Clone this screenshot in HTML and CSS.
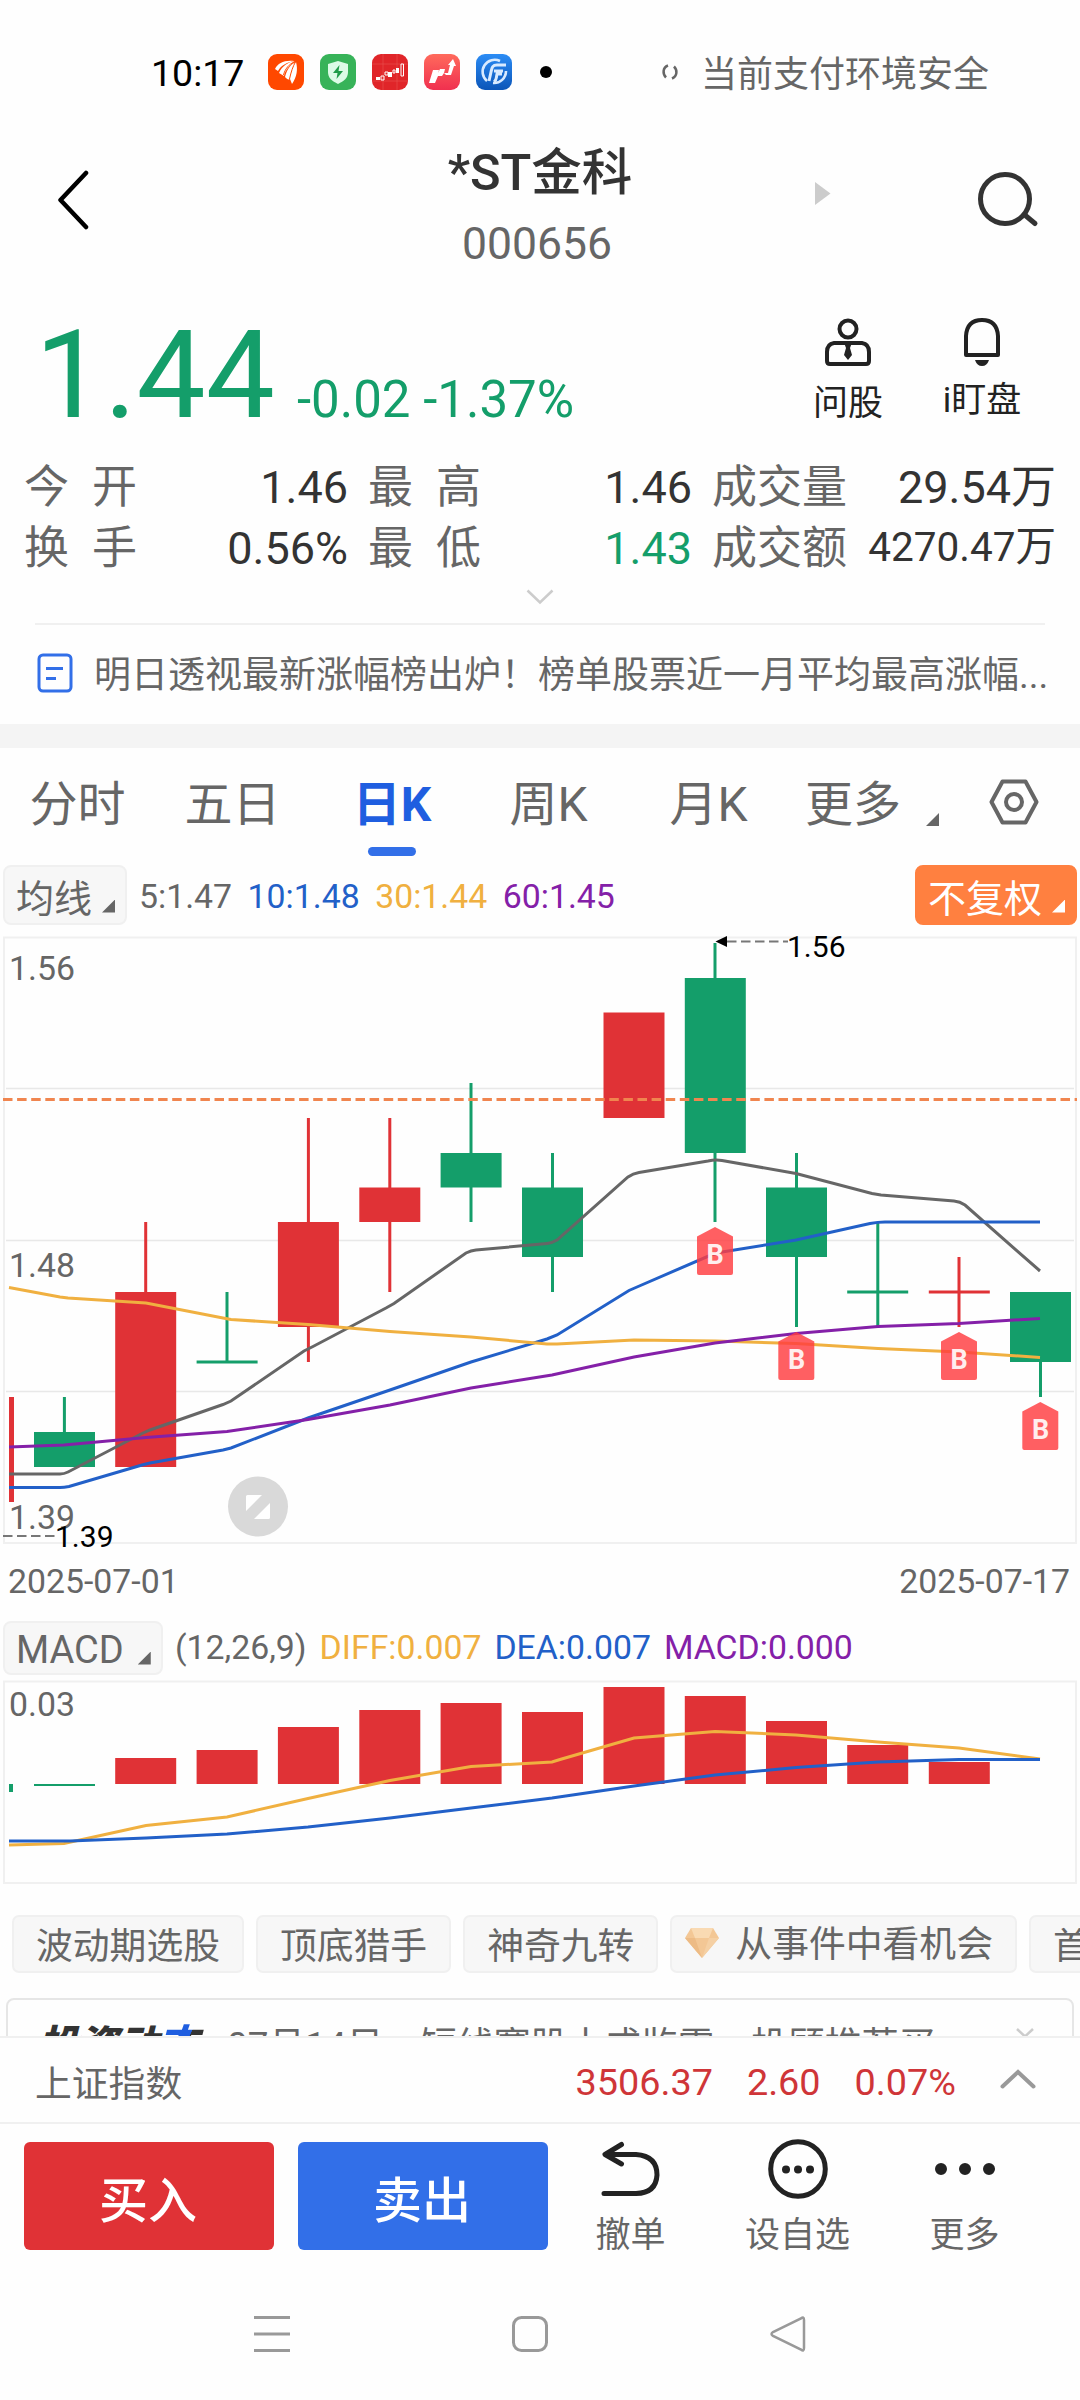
FILE: index.html
```
<!DOCTYPE html>
<html lang="zh-CN">
<head>
    <meta charset="UTF-8">
    <title>*ST金科 000656</title>
    <link rel="stylesheet" href="styles.css">
</head>
<body>
    <div class="phone">
        <div class="status-bar">
            <span class="clock">10:17</span>
            <div class="app-icons">
                <svg width="36" height="36" viewBox="0 0 36 36">
                    <rect width="36" height="36" rx="9" fill="#ff4800"/>
                    <path d="M7 15C10 9 16 6 26 7C20 8 13 11 10 17Z" fill="#fff"/>
                    <path d="M11 19C14 12 20 8 27 7C22 11 17 16 16 22Z" fill="#fff"/>
                    <path d="M17 23C19 15 23 10 28 8C30 15 29 23 24 30L22 25C20 26 19 25 17 23Z" fill="#fff"/>
                    <path d="M15.500 21C17 15 21 10 27 7.500M21.500 25C23 18 25 12 27.500 8" stroke="#ff4800" stroke-width="1" fill="none"/>
                </svg>
                <svg width="36" height="36" viewBox="0 0 36 36">
                    <rect width="36" height="36" rx="9" fill="#37b359"/>
                    <path d="M18 7L28 10V18C28 24 24 27 18 30C12 27 8 24 8 18V10Z" fill="#dcfbe6"/>
                    <path d="M19.500 11L13 19H17.500L16.500 25L23 17H18.500Z" fill="#1f9c48"/>
                </svg>
                <svg width="36" height="36" viewBox="0 0 36 36">
                    <rect width="36" height="36" rx="9" fill="#e02529"/>
                    <path d="M0 10H36M0 27H36M11 0V36M25 0V36" stroke="#ea5053" stroke-width=".6"/>
                    <path d="M4 23h4v3h-4zM16 18h4v5h-4zM24 14h3v5h-3z" fill="#fff"/>
                    <path d="M9 22h3v4h-3zM13 18h3v3h-3zM21 16h2v3h-2zM29 10h2.500v12h-2.500z" fill="none" stroke="#fff" stroke-width="1"/>
                </svg>
                <svg width="36" height="36" viewBox="0 0 36 36">
                    <defs>
                        <linearGradient id="pink" x1="0" y1="0" x2="0" y2="1">
                            <stop offset="0" stop-color="#ff6a5c"/>
                            <stop offset="1" stop-color="#f0304f"/>
                        </linearGradient>
                    </defs>
                    <rect width="36" height="36" rx="9" fill="url(#pink)"/>
                    <path d="M9 16H15L14 19L16 15H21L20 19H24L26 11H24L29 5L32 12H30L27 21H22L20 19L18 22H14L11 29H5Z" fill="#fff"/>
                </svg>
                <svg width="36" height="36" viewBox="0 0 36 36">
                    <defs>
                        <linearGradient id="blue" x1="0" y1="0" x2="0" y2="1">
                            <stop offset="0" stop-color="#2b8cf5"/>
                            <stop offset="1" stop-color="#0b55b8"/>
                        </linearGradient>
                    </defs>
                    <rect width="36" height="36" rx="9" fill="url(#blue)"/>
                    <path d="M24 7A12 12 0 0 0 11 27M30 17A12 12 0 0 1 17 29" fill="none" stroke="#d8eaff" stroke-width="2.600"/>
                    <path d="M30 11H21C16 11 16 14 15 18L13 27M27 17H18M18 28C21 26 20 24 21 20H26" fill="none" stroke="#d8eaff" stroke-width="3"/>
                </svg>
            </div>
            <span class="dot"></span>
            <svg class="spinner" width="18" height="18" viewBox="0 0 18 18">
                <path d="M7 2.500C1.500 4.500 1.500 11 5 14.500M11 15.500C16.500 13 16.500 7 13 3.500" fill="none" stroke="#666" stroke-width="2.500"/>
            </svg>
            <span class="safe">当前支付环境安全</span>
        </div>

        <div class="header">
            <svg class="back" width="32" height="60" viewBox="0 0 32 60">
                <path d="M29 3L3.500 30L29 57" fill="none" stroke="#000" stroke-width="4.500" stroke-linecap="round" stroke-linejoin="round"/>
            </svg>
            <div class="title">
                <h1>*ST金科</h1>
                <p>000656</p>
            </div>
            <svg class="next" width="16" height="24" viewBox="0 0 16 24">
                <path d="M0 0L15.500 11.500L0 23Z" fill="#ccc"/>
            </svg>
            <svg class="search" width="62" height="58" viewBox="0 0 62 58">
                <circle cx="27" cy="28" r="24.500" fill="none" stroke="#333" stroke-width="5"/>
                <path d="M48 45L57 52.500" stroke="#333" stroke-width="5" stroke-linecap="round"/>
            </svg>
        </div>

        <div class="quote">
            <span class="price">1.44</span>
            <span class="change">-0.02 -1.37%</span>
            <div class="quote-action ask">
                <svg width="48" height="48" viewBox="0 0 48 48">
                    <circle cx="24" cy="11" r="8.500" fill="none" stroke="#222" stroke-width="4"/>
                    <path d="M10 25H38Q45 26 45 34V43Q45 46 42 46H6Q3 46 3 43V34Q3 26 10 25Z" fill="none" stroke="#222" stroke-width="4"/>
                    <path d="M20.500 26H27.500L26 30L28 37L24 42L20 37L22 30Z" fill="#222"/>
                </svg>
                <span>问股</span>
            </div>
            <div class="quote-action watch">
                <svg width="48" height="48" viewBox="0 0 48 48">
                    <path d="M8 37V18Q9 2 24 2Q39 2 40 18V37Z" fill="none" stroke="#222" stroke-width="4" stroke-linejoin="round"/>
                    <path d="M17 42H31Q29 48 24 48Q19 48 17 42Z" fill="#222"/>
                </svg>
                <span>i盯盘</span>
            </div>
        </div>

        <div class="stats">
            <div class="stat"><span class="name wide">今开</span><span>1.46</span></div>
            <div class="stat"><span class="name wide">最高</span><span>1.46</span></div>
            <div class="stat"><span class="name">成交量</span><span>29.54万</span></div>
            <div class="stat"><span class="name wide">换手</span><span>0.56%</span></div>
            <div class="stat"><span class="name wide">最低</span><span class="down">1.43</span></div>
            <div class="stat"><span class="name">成交额</span><span class="small">4270.47万</span></div>
        </div>
        <div class="expand">
            <svg width="28" height="16" viewBox="0 0 28 16">
                <path d="M1.500 1.500L14 13.500L26.500 1.500" fill="none" stroke="#ccc" stroke-width="2.500"/>
            </svg>
        </div>

        <div class="news">
            <svg width="36" height="40" viewBox="0 0 36 40">
                <rect x="2" y="2" width="32" height="36" rx="4" fill="none" stroke="#326fe8" stroke-width="3"/>
                <path d="M9 15.500H26M9 25.500H19" stroke="#326fe8" stroke-width="3"/>
            </svg>
            <p>明日透视最新涨幅榜出炉！榜单股票近一月平均最高涨幅...</p>
        </div>

        <div class="tabs">
            <span>分时</span>
            <span>五日</span>
            <span class="active">日K</span>
            <span>周K</span>
            <span>月K</span>
            <span>更多</span>
            <i class="corner"></i>
            <svg width="50" height="46" viewBox="0 0 50 46">
                <path d="M13.500 2.500H36.500L47.500 23L36.500 43.500H13.500L2.500 23Z" fill="none" stroke="#666" stroke-width="4" stroke-linejoin="round"/>
                <circle cx="25" cy="23" r="8" fill="none" stroke="#666" stroke-width="4"/>
            </svg>
        </div>

        <div class="indicator">
            <div class="pill">均线<i class="corner"></i></div>
            <span class="ma5">5:1.47</span>
            <span class="ma10">10:1.48</span>
            <span class="ma30">30:1.44</span>
            <span class="ma60">60:1.45</span>
            <div class="pill adjust">不复权<i class="corner"></i></div>
        </div>

        <svg class="chart" width="1080" height="625" viewBox="0 925 1080 625">
            <!-- frame and grid -->
            <path class="frame" d="M4 937.500H1076V1543H4Z"/>
            <path class="grid" d="M6 1088.500H1074M6 1240.500H1074M6 1391.500H1074"/>

            <!-- candles -->
            <g class="up">
                <path d="M9 1397h5v105h-5z"/>
                <path d="M144.200 1222h3v70h-3zM115.200 1292h61v175h-61z"/>
                <path d="M306.900 1118h3v244h-3zM277.900 1222h61v105h-61z"/>
                <path d="M388.300 1118h3v174h-3zM359.300 1187.500h61v34.500h-61z"/>
                <path d="M603.500 1012.500h61v105.500h-61z"/>
                <path d="M957.500 1257h3v70h-3zM928.800 1290.500h61v3h-61z"/>
            </g>
            <g class="fall">
                <path d="M62.900 1397h3v35h-3zM34 1432h61v35h-61z"/>
                <path d="M225.500 1292h3v70h-3zM196.600 1360.500h61v3h-61z"/>
                <path d="M469.500 1083h3v139h-3zM440.600 1153h61v34.500h-61z"/>
                <path d="M551 1153h3v139h-3zM522 1187.500h61v69.500h-61z"/>
                <path d="M713.500 943h3v279h-3zM684.800 978h61v175h-61z"/>
                <path d="M795 1153h3v174h-3zM766 1187.500h61v69.500h-61z"/>
                <path d="M876.300 1222h3v105h-3zM847.200 1290.500h61v3h-61z"/>
                <path d="M1039 1362h3v35h-3zM1010 1292h61v70h-61z"/>
            </g>

            <path class="cost" d="M3 1099.500H1077"/>

            <!-- moving averages -->
            <g class="line">
                <path stroke="#666" d="M9 1474H60Q64 1474 68 1472L142 1433.500L150 1430L223 1404.500L231 1401L304 1351L313 1346.500L386 1308L394 1303.500L466 1253Q471 1250.500 476 1250L547 1243.500Q552 1243 557 1240L628 1177Q633 1173.500 639 1172.500L708 1161Q715 1159.500 722 1160.500L796 1173.500L872 1193.500L881 1195L954 1201Q960 1201.500 965 1205L1040 1271"/>
                <path stroke="#2260c8" d="M9 1487.500H60Q64 1487.500 69 1486.500L142 1465L150 1463L223 1450L231 1448L308 1418L390 1390L471 1362L547 1339L557 1335L629 1290.500L637 1287L711 1255L719 1252.500L796 1240L870 1223.500Q878 1222 885 1222H1040"/>
                <path stroke="#f0b040" d="M9 1287.500L60 1297L68 1298L146 1303L223 1318L231 1319.500L308 1324.500L390 1331.500L471 1337L547 1344L557 1344L634 1340L715 1341L796 1343.500L878 1348.500L959 1352L1040 1357.500"/>
                <path stroke="#8420a8" d="M9 1447L64 1445L146 1437.500L227 1431.500L308 1419.500L390 1405L471 1388L552 1375L634 1357L715 1343L796 1333.500L878 1326.500L959 1323.500L1040 1318.500"/>
            </g>

            <!-- buy marks -->
            <g class="mark">
                <path d="M715 1227L733 1236.500V1273Q733 1275 731 1275H699Q697 1275 697 1273V1236.500Z"/>
                <path d="M796.300 1332L814.300 1341.500V1378Q814.300 1380 812.300 1380H780.300Q778.300 1380 778.300 1378V1341.500Z"/>
                <path d="M959 1332L977 1341.500V1378Q977 1380 975 1380H943Q941 1380 941 1378V1341.500Z"/>
                <path d="M1040.300 1402L1058.300 1411.500V1448Q1058.300 1450 1056.300 1450H1024.300Q1022.300 1450 1022.300 1448V1411.500Z"/>
                <text x="715" y="1264">B</text>
                <text x="796.500" y="1369">B</text>
                <text x="959" y="1369">B</text>
                <text x="1040.500" y="1439">B</text>
            </g>

            <!-- high and low -->
            <path d="M715.500 941.500L727 936V947Z"/>
            <path class="leader" d="M727 941.500H788M3 1536H56"/>
            <text class="extreme" x="787" y="957">1.56</text>
            <text class="axis" x="9" y="980">1.56</text>
            <text class="axis" x="9" y="1277">1.48</text>
            <text class="axis" x="9" y="1529">1.39</text>
            <text class="extreme" x="55" y="1546.500">1.39</text>

            <!-- landscape button -->
            <circle cx="258" cy="1506.500" r="30" fill="#d9d9d9"/>
            <path d="M246 1496.500Q246 1495 247.500 1495H262L246 1511ZM270 1503V1517.500Q270 1519 268.500 1519H254Z" fill="#fff"/>
        </svg>
        <div class="dates">
            <span>2025-07-01</span>
            <span>2025-07-17</span>
        </div>

        <div class="indicator macd">
            <div class="pill">MACD<i class="corner"></i></div>
            <span>(12,26,9)</span>
            <span class="ma30">DIFF:0.007</span>
            <span class="ma10">DEA:0.007</span>
            <span class="ma60">MACD:0.000</span>
        </div>
        <svg class="chart" width="1080" height="212" viewBox="0 1675 1080 212">
            <path class="frame" d="M4 1681.500H1076V1883H4Z"/>
            <text class="axis" x="9" y="1716">0.03</text>
            <path class="fall" d="M9 1784h4v8h-4zM34 1784h61v2h-61z"/>
            <path class="up" d="M115.200 1758h61v26h-61zM196.600 1750h61v34h-61zM277.900 1727h61v57h-61zM359.300 1710h61v74h-61zM440.600 1703h61v81h-61zM522 1712h61v72h-61zM603.500 1687h61v97h-61zM684.800 1696h61v88h-61zM766 1721h61v63h-61zM847.200 1745h61v39h-61zM928.800 1762h61v22h-61z"/>
            <g class="line">
                <path stroke="#f0b040" d="M9 1845L64 1843.500L146 1825.500L227 1817L308 1798.500L390 1780.500L471 1766.500L552 1762L560 1759.500L634 1738L715 1731.500L796 1735L878 1742L959 1748L1040 1759"/>
                <path stroke="#2260c8" d="M9 1841H70L146 1838L227 1834L308 1827L390 1818L471 1808L552 1798L634 1786L715 1775L796 1767.500L878 1762L959 1759.500H1040"/>
            </g>
        </svg>

        <div class="chips">
            <span>波动期选股</span>
            <span>顶底猎手</span>
            <span>神奇九转</span>
            <span class="gem">
                <svg width="34" height="30" viewBox="0 0 34 30">
                    <path d="M6 0H28L34 10L17 30L0 10Z" fill="#f3c795"/>
                    <path d="M6 0H28L24 10H10Z" fill="#f9dab3"/>
                    <path d="M0 10H10L17 30Z" fill="#edbb85"/>
                    <path d="M34 10H24L17 30Z" fill="#f5d0a4"/>
                </svg>
                从事件中看机会
            </span>
            <span>首</span>
        </div>

        <div class="feed">
            <div class="feed-card">
                <span class="logo">投资动<em>态</em></span>
                <span class="feed-text">07月14日，短线赛股丨成监雷，投顾推荐买</span>
                <svg width="18" height="10" viewBox="0 0 18 10">
                    <path d="M1 1L9 8.500L17 1" fill="none" stroke="#ccc" stroke-width="2.500"/>
                </svg>
            </div>
        </div>

        <div class="index-bar">
            <span class="index-name">上证指数</span>
            <span class="index-value">3506.37</span>
            <span class="index-value">2.60</span>
            <span class="index-value">0.07%</span>
            <svg width="36" height="20" viewBox="0 0 36 20">
                <path d="M2.500 17.500L18 3L33.500 17.500" fill="none" stroke="#999" stroke-width="4" stroke-linecap="round"/>
            </svg>
        </div>

        <div class="trade-bar">
            <button class="buy">买入</button>
            <button class="sell">卖出</button>
            <div class="tool">
                <svg width="60" height="60" viewBox="0 0 60 60">
                    <path d="M20.500 5.500L4 15.500L20.500 25M5 15.500H35Q56 17 56 36Q55 54 35 54.500H3" fill="none" stroke="#222" stroke-width="5" stroke-linecap="round" stroke-linejoin="round"/>
                </svg>
                <span>撤单</span>
            </div>
            <div class="tool">
                <svg width="60" height="60" viewBox="0 0 60 60">
                    <circle cx="30" cy="30" r="27.300" fill="none" stroke="#222" stroke-width="5"/>
                    <path d="M18 30.500h.01M30 30.500h.01M42 30.500h.01" stroke="#222" stroke-width="8" stroke-linecap="round"/>
                </svg>
                <span>设自选</span>
            </div>
            <div class="tool">
                <svg width="60" height="60" viewBox="0 0 60 60">
                    <path d="M6 30h.01M30 30h.01M54 30h.01" stroke="#222" stroke-width="12" stroke-linecap="round"/>
                </svg>
                <span>更多</span>
            </div>
        </div>

        <div class="nav-bar">
            <svg width="36" height="36" viewBox="0 0 36 36">
                <path d="M0 1.500H36M0 18H36M0 34.500H36" stroke="#999" stroke-width="3"/>
            </svg>
            <svg width="36" height="36" viewBox="0 0 36 36">
                <rect x="1.500" y="1.500" width="33" height="33" rx="8" fill="none" stroke="#999" stroke-width="3"/>
            </svg>
            <svg width="36" height="36" viewBox="0 0 36 36">
                <path d="M31 2.500Q34 0 34 4V32Q34 36 31 33.500L3 20Q0 18 3 16Z" fill="none" stroke="#999" stroke-width="2.500"/>
            </svg>
        </div>
    </div>
</body>
</html>
```
FILE: styles.css
```
* {
    box-sizing: border-box;
}
body {
    margin: 0;
    background: #fefefe;
    color: #666;
    font-family: Roboto, "Noto Sans CJK SC", sans-serif;
    font-size: 36.8px;
}
h1, p {
    margin: 0;
}
svg {
    display: block;
    flex-shrink: 0;
}
.phone {
    width: 1080px;
    height: 2400px;
    overflow: hidden;
    white-space: nowrap;
}

/* status bar */
.status-bar {
    display: flex;
    align-items: center;
    height: 144px;
    padding-left: 151px;
}
.clock {
    width: 117px;
    padding-top: 2px;
    color: #000;
    font-size: 37.5px;
    font-weight: 450;
}
.app-icons {
    display: flex;
    gap: 16px;
}
.dot {
    width: 12px;
    height: 12px;
    margin-left: 28px;
    border-radius: 50%;
    background: #000;
}
.spinner {
    margin-left: 109px;
}
.safe {
    margin-left: 22px;
    padding-top: 5px;
    font-size: 36px;
    line-height: 40px;
}

/* header */
.header {
    display: flex;
    height: 144px;
}
.back {
    margin: 26px 0 0 57px;
}
.title {
    width: 280px;
    margin-left: 311px;
    text-align: center;
}
.title h1 {
    color: #333;
    font-size: 50.5px;
    font-weight: 500;
    line-height: 58px;
}
.title p {
    margin-top: 14px;
    padding-right: 6px;
    font-size: 44.5px;
    line-height: 57px;
}
.next {
    margin: 38px 0 0 135px;
}
.search {
    margin: 27px 0 0 147px;
}

/* quote */
.quote {
    display: flex;
    height: 169px;
    padding-left: 35px;
}
.price, .change {
    color: #149e6a;
}
.price {
    width: 262px;
    font-size: 123px;
    font-weight: 450;
    line-height: 122px;
    margin-top: 26px;
}
.change {
    width: 503px;
    margin-top: 81px;
    font-size: 51px;
    line-height: 62px;
}
.quote-action {
    display: flex;
    flex-direction: column;
    align-items: center;
    width: 96px;
    margin-top: 30px;
    color: #222;
    font-size: 35px;
    line-height: 40px;
}
.quote-action span {
    margin-top: 18px;
}
.watch {
    margin-left: 38px;
}
.watch span {
    margin-top: 15px;
}

.stats {
    display: grid;
    grid-template-columns: 324px 324px 344px;
    column-gap: 20px;
    padding-left: 24px;
    font-size: 45px;
    line-height: 61px;
    color: #333;
}
.stat {
    display: flex;
    justify-content: space-between;
}
.stat .name {
    color: #666;
}
.stat .wide {
    letter-spacing: 23px;
}
.stat .down {
    color: #149e6a;
}
.stat .small {
    font-size: 40.5px;
    line-height: 58px;
}
.expand {
    display: flex;
    justify-content: center;
    height: 46px;
    margin: 0 35px;
    padding-top: 10px;
    border-bottom: 2px solid #f0f0f0;
}

.news {
    display: flex;
    align-items: center;
    height: 99px;
    padding: 0 36px 3px 37px;
}
.news p {
    margin-left: 21px;
    padding-bottom: 2px;
    font-size: 37px;
}

/* period tabs */
.tabs {
    display: grid;
    grid-template-columns: 156px 154px 172px 134px 186px 103px 35px 50px;
    border-top: 24px solid #f4f4f4;
    height: 141px;
    font-size: 48px;
    text-align: center;
    line-height: 114px;
}
.tabs span {
    margin-left: -1px;
}
.tabs .active {
    display: flex;
    flex-direction: column;
    align-items: center;
    margin-left: -8px;
    color: #1f5ee0;
    font-weight: 700;
}
.tabs .active::after {
    content: "";
    width: 48px;
    height: 9px;
    margin-top: -15px;
    border-radius: 5px;
    background: #326fe8;
}
.tabs .corner {
    margin: 65px 0 0 21px;
}
.tabs svg {
    margin: 31px 0 0 49px;
}
.corner {
    display: block;
    width: 13px;
    height: 13px;
    background: currentColor;
    clip-path: polygon(100% 0, 100% 100%, 0 100%);
}

/* indicator rows */
.indicator {
    display: flex;
    align-items: center;
    height: 60px;
    padding: 0 3px;
    font-size: 33.8px;
}
.indicator span {
    margin-right: 15.5px;
    padding-top: 3px;
}
.pill {
    display: flex;
    align-items: center;
    width: 124px;
    height: 60px;
    margin-right: 12px;
    padding: 1px 0 0 11px;
    border: 2px solid #f0f0f0;
    border-radius: 8px;
    background: #f7f7f7;
    font-size: 38px;
}
.pill .corner {
    margin: 21px 0 0 10px;
}
.adjust {
    width: 162px;
    margin: 0 0 0 auto;
    border-color: #ff8040;
    background: #ff8040;
    color: #fff;
}
.ma10 {
    color: #2260c8;
}
.ma30 {
    color: #f0b040;
}
.ma60 {
    color: #8420a8;
}

/* charts */
.frame {
    fill: none;
    stroke: #f0f0f0;
    stroke-width: 2;
}
.grid {
    stroke: #e8e8e8;
    stroke-width: 1.5;
}
.up {
    fill: #e03236;
}
.fall {
    fill: #149e6a;
}
.cost {
    stroke: #f0854f;
    stroke-width: 3;
    stroke-dasharray: 9.5 4.6;
}
.line {
    fill: none;
    stroke-width: 3;
}
.mark {
    fill: rgba(255, 60, 64, .82);
}
.mark text {
    fill: #ffeeee;
    font-size: 27px;
    font-weight: 700;
    text-anchor: middle;
}
.leader {
    stroke: #777;
    stroke-width: 2;
    stroke-dasharray: 9.5 4.5;
}
.axis {
    fill: #666;
    font-size: 33.8px;
}
.extreme {
    fill: #000;
    font-size: 30px;
}
.dates {
    display: flex;
    justify-content: space-between;
    height: 71px;
    padding: 12px 10px 0 8px;
    font-size: 33.8px;
    line-height: 40px;
}
.macd {
    height: 54px;
}
.macd .pill {
    width: 160px;
    height: 54px;
    padding-top: 3px;
}
.macd span {
    margin-right: 13px;
    padding: 0 0 1px;
}
.macd .pill .corner {
    margin: 17px 0 0 14px;
}

/* tool chips */
.chips {
    display: flex;
    gap: 12px;
    margin-top: 28px;
    padding-left: 12px;
}
.chips span {
    flex-shrink: 0;
    height: 58px;
    padding: 0 22px;
    border: 2px solid #f0f0f0;
    border-radius: 7px;
    background: #f7f7f7;
    line-height: 59px;
}
.chips .gem {
    display: flex;
    align-items: center;
    gap: 16px;
    padding-left: 13px;
}
.chips .gem svg {
    margin-top: -2px;
}
.feed {
    height: 63px;
    padding: 25px 6px 0;
    overflow: hidden;
}
.feed-card {
    display: flex;
    align-items: center;
    height: 88px;
    padding-left: 30px;
    border: 2px solid #e6e6e6;
    border-radius: 8px;
}
.logo {
    width: 189px;
    color: #333;
    font-size: 40px;
    font-style: italic;
    font-weight: 900;
}
/* blue slash over the left half of the last character */
.logo em {
    padding-right: 8px;
    background: linear-gradient(115deg, #1f5ee0 54%, #333 55%);
    -webkit-background-clip: text;
    background-clip: text;
    color: transparent;
}
.feed-card svg {
    margin: -18px 0 0 81px;
}

/* bottom bars */
.index-bar {
    display: flex;
    align-items: center;
    height: 88px;
    padding: 3px 44px 0 35px;
    border-top: 2px solid #f0f0f0;
    border-bottom: 2px solid #f0f0f0;
}
.index-name {
    flex: 1;
    padding-bottom: 1px;
}
.index-value {
    margin-right: 34px;
    color: #cf3538;
    font-size: 37.8px;
}
.index-bar svg {
    margin-left: 10px;
    margin-top: -5px;
}
.trade-bar {
    display: flex;
    padding: 18px 0 0 24px;
}
.trade-bar button {
    width: 250px;
    height: 108px;
    margin-right: 24px;
    padding: 0 2px 0 0;
    border: 0;
    border-radius: 6px;
    color: #fff;
    font-family: inherit;
    font-size: 49px;
    font-weight: 500;
}
.buy {
    background: #e03236;
}
.sell {
    background: #326fe8;
}
.tool {
    display: flex;
    flex-direction: column;
    align-items: center;
    width: 167px;
    margin-top: -3px;
    font-size: 35px;
    line-height: 40px;
}
.tool:nth-child(3) {
    margin-left: -25px;
}
.tool span {
    margin-top: 17px;
}
.nav-bar {
    display: flex;
    gap: 222px;
    padding: 60px 0 0 254px;
}
```
